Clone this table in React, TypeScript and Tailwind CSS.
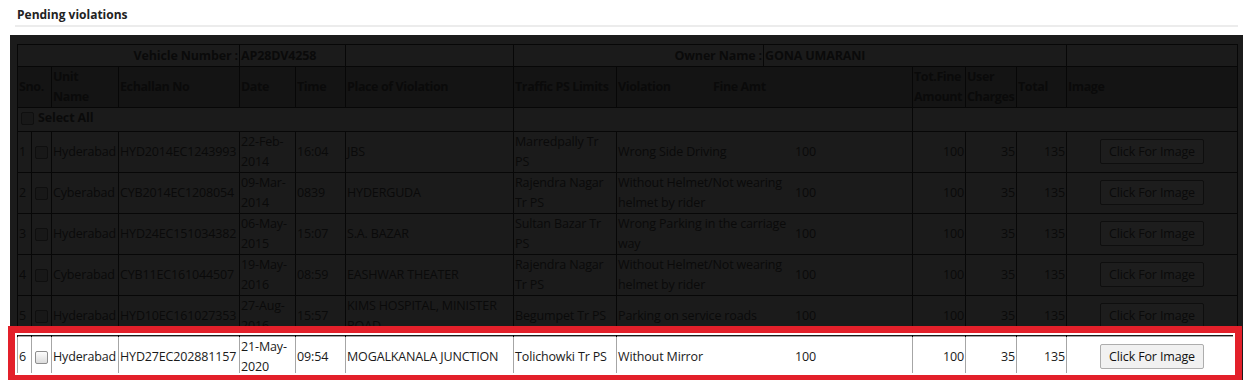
import React from "react";

type Row = {
  sno: number;
  unit: string;
  echallan: string;
  date: string;
  time: string;
  place: string;
  ps: string;
  violation: string;
  fine: number;
  charges: number;
  total: number;
};

const rows: Row[] = [
  { sno: 1, unit: "Hyderabad", echallan: "HYD2014EC1243993", date: "22-Feb-2014", time: "16:04", place: "JBS", ps: "Marredpally Tr PS", violation: "Wrong Side Driving", fine: 100, charges: 35, total: 135 },
  { sno: 2, unit: "Cyberabad", echallan: "CYB2014EC1208054", date: "09-Mar-2014", time: "0839", place: "HYDERGUDA", ps: "Rajendra Nagar Tr PS", violation: "Without Helmet/Not wearing helmet by rider", fine: 100, charges: 35, total: 135 },
  { sno: 3, unit: "Hyderabad", echallan: "HYD24EC151034382", date: "06-May-2015", time: "15:07", place: "S.A. BAZAR", ps: "Sultan Bazar Tr PS", violation: "Wrong Parking in the carriage way", fine: 100, charges: 35, total: 135 },
  { sno: 4, unit: "Cyberabad", echallan: "CYB11EC161044507", date: "19-May-2016", time: "08:59", place: "EASHWAR THEATER", ps: "Rajendra Nagar Tr PS", violation: "Without Helmet/Not wearing helmet by rider", fine: 100, charges: 35, total: 135 },
  { sno: 5, unit: "Hyderabad", echallan: "HYD10EC161027353", date: "27-Aug-2016", time: "15:57", place: "KIMS HOSPITAL, MINISTER ROAD", ps: "Begumpet Tr PS", violation: "Parking on service roads", fine: 100, charges: 35, total: 135 },
];

const current: Row = { sno: 6, unit: "Hyderabad", echallan: "HYD27EC202881157", date: "21-May-2020", time: "09:54", place: "MOGALKANALA JUNCTION", ps: "Tolichowki Tr PS", violation: "Without Mirror", fine: 100, charges: 35, total: 135 };

const colWidths = [14, 20, 67, 121, 56, 50, 168, 103, 147, 149, 53, 51, 50, 171];

const dk = "border border-[#070707] px-[1px] py-0 align-middle";
const dkNoBottom = "border border-b-0 border-[#070707] px-[1px] py-0 align-middle";
const lt = "border border-[#a6a6a6] px-[1px] py-0 align-middle";

function DarkBox() {
  return <span className="inline-block w-[13px] h-[13px] border border-[#0f0f0f] bg-[#181818] rounded-[2px] align-middle" />;
}

function DataRow({ r, last }: { r: Row; last?: boolean }) {
  const c = last ? dkNoBottom : dk;
  return (
    <tr className="h-[41px]">
      <td className={c}>{r.sno}</td>
      <td className={c + " text-center"}><DarkBox /></td>
      <td className={c}>{r.unit}</td>
      <td className={c}>{r.echallan}</td>
      <td className={c}>{r.date}</td>
      <td className={c}>{r.time}</td>
      <td className={c}>{r.place}</td>
      <td className={c}>{r.ps}</td>
      <td className={c} colSpan={2}>
        <div className="flex items-center">
          <span className="w-[177px] shrink-0">{r.violation}</span>
          <span>{r.fine}</span>
        </div>
      </td>
      <td className={c + " text-right"}>{r.fine}</td>
      <td className={c + " text-right"}>{r.charges}</td>
      <td className={c + " text-right"}>{r.total}</td>
      <td className={c + " text-center"}>
        <span className="inline-block h-[25px] w-[104px] border border-[#0e0e0e] bg-[#1d1d1d] rounded-[2px] leading-[23px]">Click For Image</span>
      </td>
    </tr>
  );
}

export default function App() {
  const r = current;
  return (
    <div className="relative h-[380px] overflow-hidden bg-white text-[12.5px] leading-[20px] tracking-[-0.15px]" style={{ fontFamily: '"Open Sans", "Liberation Sans", sans-serif' }}>
      <div className="pl-[17px] pt-[7px] pb-[2px] text-[12px] leading-[16px] tracking-normal font-bold text-[#222]">Pending violations</div>
      <div className="ml-[15px] w-[1223px] h-[2px] bg-[#ececec]" />
      <div className="mt-[8px] ml-[10px] w-[1233px] h-[400px] bg-[#1b1b1b] pl-[7px] pt-[9px] text-[#0a0a0a]">
        <table className="table-fixed border-collapse w-[1220px]">
          <colgroup>
            {colWidths.map((w, i) => (
              <col key={i} style={{ width: w }} />
            ))}
          </colgroup>
          <tbody>
            <tr className="h-[22px] font-bold">
              <td className={dk + " text-right"} colSpan={4}>Vehicle Number :</td>
              <td className={dk} colSpan={2}>AP28DV4258</td>
              <td className={dk}></td>
              <td className={dk + " text-right"} colSpan={2}>Owner Name :</td>
              <td className={dk} colSpan={4}>GONA UMARANI</td>
              <td className={dk}></td>
            </tr>
            <tr className="h-[39px] font-bold bg-[#141414] tracking-[-0.4px]">
              <td className={dk} colSpan={2}>Sno.</td>
              <td className={dk}>Unit<br />Name</td>
              <td className={dk}>Echallan No</td>
              <td className={dk}>Date</td>
              <td className={dk}>Time</td>
              <td className={dk}>Place of Violation</td>
              <td className={dk + " whitespace-nowrap"}>Traffic PS Limits</td>
              <td className={dk} colSpan={2}>
                <div className="flex">
                  <span className="w-[95px] shrink-0">Violation</span>
                  <span>Fine Amt</span>
                </div>
              </td>
              <td className={dk}>Tot.Fine<br />Amount</td>
              <td className={dk}>User<br />Charges</td>
              <td className={dk}>Total</td>
              <td className={dk}>Image</td>
            </tr>
            <tr className="h-[20px]">
              <td className={dk + " font-bold"} colSpan={7}>
                <span className="inline-flex items-center gap-[4px] pl-[2px]">
                  <DarkBox />
                  Select All
                </span>
              </td>
              <td className={dk} colSpan={3}></td>
              <td className={dk} colSpan={5}></td>
            </tr>
            {rows.map((row, i) => (
              <DataRow key={row.sno} r={row} last={i === rows.length - 1} />
            ))}
            <tr className="h-[40px] bg-white text-[#1a1a1a]">
              <td className={lt}>{r.sno}</td>
              <td className={lt + " text-center"}>
                <span className="inline-block w-[13px] h-[13px] border border-[#8e8e8e] rounded-[2px] bg-gradient-to-b from-[#fdfdfd] to-[#dcdcdc] align-middle" />
              </td>
              <td className={lt}>{r.unit}</td>
              <td className={lt}>{r.echallan}</td>
              <td className={lt}>{r.date}</td>
              <td className={lt}>{r.time}</td>
              <td className={lt}>{r.place}</td>
              <td className={lt}>{r.ps}</td>
              <td className={lt} colSpan={2}>
                <div className="flex items-center">
                  <span className="w-[177px] shrink-0">{r.violation}</span>
                  <span>{r.fine}</span>
                </div>
              </td>
              <td className={lt + " text-right"}>{r.fine}</td>
              <td className={lt + " text-right"}>{r.charges}</td>
              <td className={lt + " text-right"}>{r.total}</td>
              <td className={lt + " text-center"}>
                <span className="inline-block h-[25px] w-[104px] border border-[#adadad] bg-[#f1f1f1] rounded-[2px] leading-[23px] text-[#111]">Click For Image</span>
              </td>
            </tr>
          </tbody>
        </table>
      </div>
      <div className="absolute left-[8px] top-[326px] w-[1234px] h-[56px] border-[7px] border-[#e3202a] shadow-[inset_0_0_0_2px_#ffffff]" />
    </div>
  );
}
